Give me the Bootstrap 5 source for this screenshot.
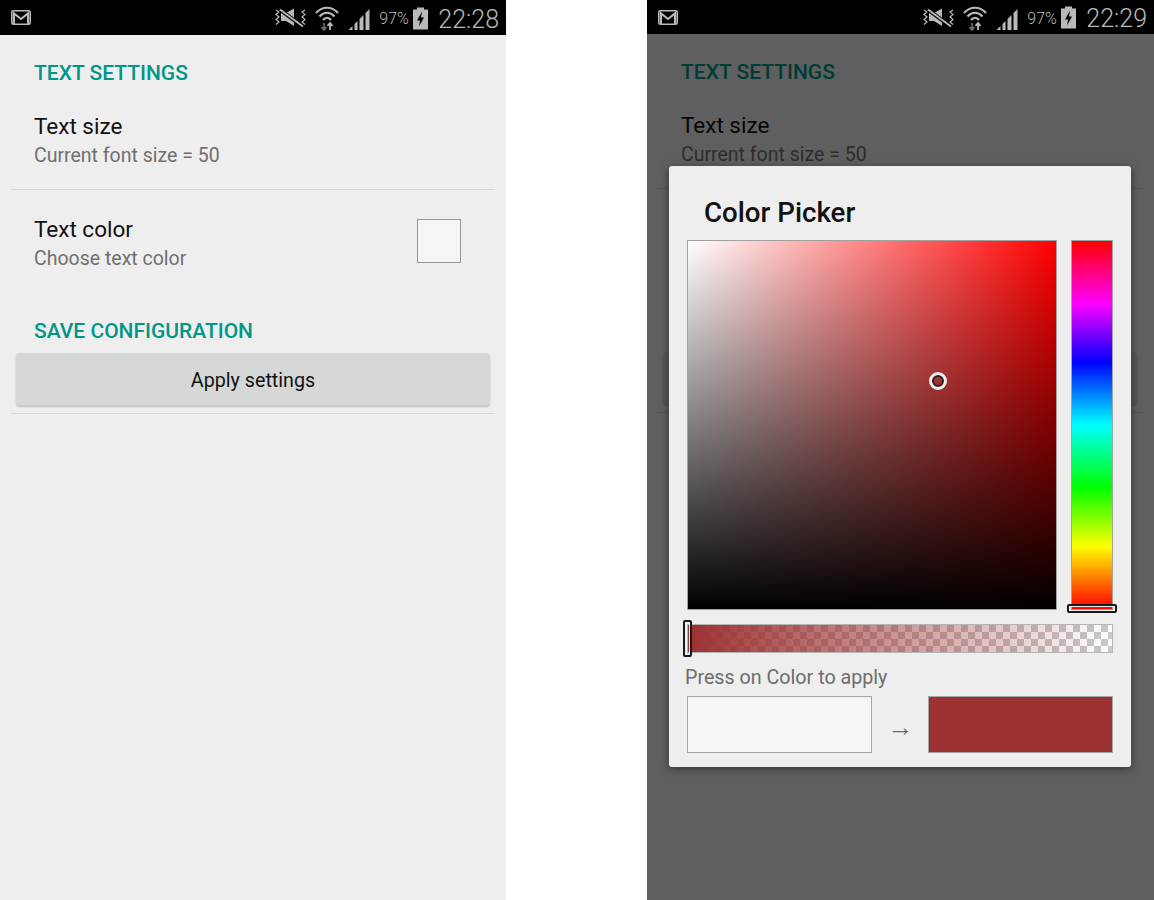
<!DOCTYPE html>
<html lang="en">
<head>
    <meta charset="UTF-8">
    <meta name="viewport" content="width=device-width, initial-scale=1.0">
    <title>Color Picker Preference</title>
    <link href="https://cdn.jsdelivr.net/npm/bootstrap@5.3.3/dist/css/bootstrap.min.css" rel="stylesheet">
    <style>
        body { background: #fff; font-family: Roboto, "Liberation Sans", sans-serif; margin: 0; }
        .screens { height: 900px; overflow: hidden; }
        .phone { width: 506px; height: 900px; background: #eee; }
        .phone-wide { width: 507px; }
        .status-strip { height: 35px; background: #000; color: #b9b9b9; padding: 1px 7px 0 11px; }
        .phone-wide .status-strip { height: 34px; }
        .mail-icon { margin-top: -1px; }
        .wifi-icon { margin-left: 8px; }
        .signal-icon { margin-left: 9px; }
        .status-pct { font-size: 16px; font-weight: 300; line-height: 1; width: 34px; margin-left: 9px; padding-top: 2px; }
        .status-time { font-size: 25px; font-weight: 300; line-height: 1; margin-left: 10px; padding-top: 2px; }
        .sec-head { color: #009688; font-size: 21px; font-weight: 500; line-height: 28px; padding-left: 34px; }
        .sec-first { margin-top: 24px; }
        .sec-save { margin-top: 25px; }
        .pref-row { padding: 23px 45px 20px 34px; }
        .pref-title { color: #111; font-size: 22.5px; line-height: 32px; margin-bottom: 1px; }
        .pref-sub { color: #707070; font-size: 19.5px; line-height: 26px; }
        .pref-swatch { width: 44px; height: 44px; background: #f5f5f5; border: 1px solid #999; margin-top: 6px; }
        .rule { height: 1px; background: #d6d8d8; margin: 0 11px; }
        .apply-btn { display: block; width: 474px; height: 52px; margin: 8px 0 8px 16px; padding: 4px 0 0; background: #d6d8d8; border: 0; border-radius: 3px; box-shadow: 0 2px 2px rgba(0,0,0,.18); color: #111; font-size: 19.7px; line-height: 48px; }
        .dim-layer { top: 34px; background: rgba(0,0,0,.6); }
        .picker-dialog { left: 22px; top: 166px; width: 462px; height: 601px; background: #eee; border-radius: 3px; box-shadow: 0 2px 10px rgba(0,0,0,.45); padding: 0 18px; }
        .picker-title { color: #111; font-size: 27.7px; font-weight: 500; line-height: 74px; height: 74px; padding: 10px 0 0 17px; }
        .sv-box { width: 370px; height: 370px; border: 1px solid #a0a0a0; background: linear-gradient(to top, #000, transparent), linear-gradient(to right, #fff, #f00); }
        .sv-cursor { left: 241px; top: 131px; width: 18px; height: 18px; border-radius: 50%; border: 3px solid #eee; background: transparent; box-shadow: inset 0 0 0 2px #222; }
        .hue-box { width: 42px; height: 370px; margin-left: 14px; border: 1px solid #a0a0a0; background: linear-gradient(to bottom, #f00 0%, #f0f 17%, #00f 33%, #0ff 50%, #0f0 67%, #ff0 83%, #f00 100%); }
        .hue-handle { left: -5px; top: 363px; width: 50px; height: 9px; border: 2px solid #1a1a1a; border-radius: 2px; box-shadow: inset 0 0 0 1px #eee; }
        .alpha-box { height: 29px; margin-top: 14px; border: 1px solid #b5b5b5; background: linear-gradient(to right, #9c3232, rgba(156,50,50,0)), conic-gradient(#c8c8c8 25%, #fff 0 50%, #c8c8c8 0 75%, #fff 0) 0 0 / 14px 14px; }
        .alpha-handle { left: -5px; top: -5px; width: 9px; height: 37px; border: 2px solid #1a1a1a; border-radius: 2px; box-shadow: inset 0 0 0 1px #eee; }
        .picker-hint { color: #6d6d6d; font-size: 19.7px; line-height: 28px; margin: 11px 0 4px -2px; }
        .swatch-big { width: 185px; height: 57px; border: 1px solid #a5a5a5; }
        .swatch-old { background: #f5f5f5; }
        .swatch-new { background: #9c3232; }
        .swatch-arrow { width: 56px; height: 57px; color: #6d6d6d; font-size: 26px; line-height: 1; padding: 18px 0 0 1px; }
    </style>
</head>
<body>
    <div class="screens d-flex justify-content-between">
        <div class="phone">
            <div class="status-strip d-flex align-items-center">
                <svg class="mail-icon" width="20" height="15" viewBox="0 0 20 15"><rect x=".8" y=".8" width="18.4" height="13.4" rx="1.5" fill="none" stroke="#b9b9b9" stroke-width="1.6"/><path d="M3 14V3.400l7 5.600 7-5.600V14" fill="none" stroke="#b9b9b9" stroke-width="2"/></svg>
                <div class="flex-grow-1"></div>
                <svg width="33" height="20" viewBox="0 0 33 20"><path d="M2 2l3 2-3 2.500 3 2.500-3 2.500 3 2.500-3 2.500M31 2l-3 2 3 2.500-3 2.500 3 2.500-3 2.500 3 2.500" fill="none" stroke="#b9b9b9" stroke-width="1.200"/><path d="M7 5h5l8-4.500V18l-8-5H7z" fill="#b9b9b9"/><path d="M5 1l23 17" stroke="#000" stroke-width="4"/><path d="M6 1.500l23 17" stroke="#b9b9b9" stroke-width="1.800"/></svg>
                <svg class="wifi-icon" width="24" height="26" viewBox="0 0 24 26"><path d="M1 8c6-7 16-7 22 0M4.500 11.500c4.500-5 10.500-5 15 0M8 15c2.500-3 5.500-3 8 0" fill="none" stroke="#b9b9b9" stroke-width="2.200"/><path d="M9 18v7M6.500 22l2.500 3 2.500-3" fill="none" stroke="#6a6a6a" stroke-width="1.800"/><path d="M15 25v-7M12.500 21l2.500-3 2.500 3" fill="none" stroke="#b9b9b9" stroke-width="1.800"/></svg>
                <svg class="signal-icon" width="22" height="24" viewBox="0 0 21 24"><path d="M0 24l4-4v4zM6 24v-6l3-3v9zM11 24V13l4-4v15zM17 24V7l4-4v21z" fill="#b9b9b9"/></svg>
                <span class="status-pct">97%</span>
                <svg width="15" height="23" viewBox="0 0 15 22"><path d="M4 0h7v2h4v20H0V2h4z" fill="#b9b9b9"/><path d="M9 4L4 13h3l-1 6 5-9H8z" fill="#000"/></svg>
                <span class="status-time">22:28</span>
            </div>
            <div class="sec-head sec-first">TEXT SETTINGS</div>
            <div class="pref-row">
                <div class="pref-title">Text size</div>
                <div class="pref-sub">Current font size = 50</div>
            </div>
            <div class="rule"></div>
            <div class="pref-row d-flex justify-content-between align-items-start">
                <div>
                    <div class="pref-title">Text color</div>
                    <div class="pref-sub">Choose text color</div>
                </div>
                <div class="pref-swatch"></div>
            </div>
            <div class="sec-head sec-save">SAVE CONFIGURATION</div>
            <button type="button" class="btn apply-btn">Apply settings</button>
            <div class="rule"></div>
        </div>

        <div class="phone phone-wide position-relative">
            <div class="status-strip d-flex align-items-center">
                <svg class="mail-icon" width="20" height="15" viewBox="0 0 20 15"><rect x=".8" y=".8" width="18.4" height="13.4" rx="1.5" fill="none" stroke="#b9b9b9" stroke-width="1.6"/><path d="M3 14V3.400l7 5.600 7-5.600V14" fill="none" stroke="#b9b9b9" stroke-width="2"/></svg>
                <div class="flex-grow-1"></div>
                <svg width="33" height="20" viewBox="0 0 33 20"><path d="M2 2l3 2-3 2.500 3 2.500-3 2.500 3 2.500-3 2.500M31 2l-3 2 3 2.500-3 2.500 3 2.500-3 2.500 3 2.500" fill="none" stroke="#b9b9b9" stroke-width="1.200"/><path d="M7 5h5l8-4.500V18l-8-5H7z" fill="#b9b9b9"/><path d="M5 1l23 17" stroke="#000" stroke-width="4"/><path d="M6 1.500l23 17" stroke="#b9b9b9" stroke-width="1.800"/></svg>
                <svg class="wifi-icon" width="24" height="26" viewBox="0 0 24 26"><path d="M1 8c6-7 16-7 22 0M4.500 11.500c4.500-5 10.500-5 15 0M8 15c2.500-3 5.500-3 8 0" fill="none" stroke="#b9b9b9" stroke-width="2.200"/><path d="M9 18v7M6.500 22l2.500 3 2.500-3" fill="none" stroke="#6a6a6a" stroke-width="1.800"/><path d="M15 25v-7M12.500 21l2.500-3 2.500 3" fill="none" stroke="#b9b9b9" stroke-width="1.800"/></svg>
                <svg class="signal-icon" width="22" height="24" viewBox="0 0 21 24"><path d="M0 24l4-4v4zM6 24v-6l3-3v9zM11 24V13l4-4v15zM17 24V7l4-4v21z" fill="#b9b9b9"/></svg>
                <span class="status-pct">97%</span>
                <svg width="15" height="23" viewBox="0 0 15 22"><path d="M4 0h7v2h4v20H0V2h4z" fill="#b9b9b9"/><path d="M9 4L4 13h3l-1 6 5-9H8z" fill="#000"/></svg>
                <span class="status-time">22:29</span>
            </div>
            <div class="sec-head sec-first">TEXT SETTINGS</div>
            <div class="pref-row">
                <div class="pref-title">Text size</div>
                <div class="pref-sub">Current font size = 50</div>
            </div>
            <div class="rule"></div>
            <!-- row text sits under the dialog, only the button edges show past it -->
            <div class="pref-row d-flex justify-content-between align-items-start invisible">
                <div>
                    <div class="pref-title">Text color</div>
                    <div class="pref-sub">Choose text color</div>
                </div>
                <div class="pref-swatch"></div>
            </div>
            <div class="sec-head sec-save invisible">SAVE CONFIGURATION</div>
            <button type="button" class="btn apply-btn"></button>
            <div class="rule"></div>

            <div class="dim-layer position-absolute start-0 end-0 bottom-0"></div>
            <div class="picker-dialog position-absolute">
                <div class="picker-title">Color Picker</div>
                <div class="d-flex">
                    <div class="sv-box position-relative"><div class="sv-cursor position-absolute"></div></div>
                    <div class="hue-box position-relative"><div class="hue-handle position-absolute"></div></div>
                </div>
                <div class="alpha-box position-relative"><div class="alpha-handle position-absolute"></div></div>
                <div class="picker-hint">Press on Color to apply</div>
                <div class="d-flex">
                    <div class="swatch-big swatch-old"></div>
                    <div class="swatch-arrow text-center">→</div>
                    <div class="swatch-big swatch-new"></div>
                </div>
            </div>
        </div>
    </div>
    <script src="https://cdn.jsdelivr.net/npm/bootstrap@5.3.3/dist/js/bootstrap.bundle.min.js"></script>
</body>
</html>
